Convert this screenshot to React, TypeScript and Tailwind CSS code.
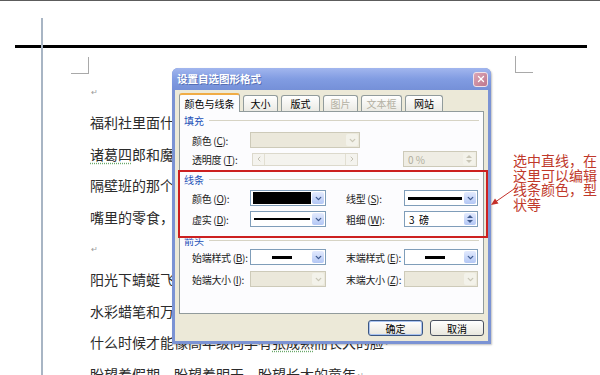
import { ChevronDown, ChevronLeft, ChevronRight, X } from 'lucide-react';
import type { ReactNode } from 'react';

const cjk = "font-['Noto_Sans_CJK_SC','Noto_Sans',sans-serif]";

const Ret = () => <span className="ml-px align-top text-[8px] text-[#9a9a9a]">↵</span>;

const Arrows = () => (
  <>
    <svg width="6" height="3" viewBox="0 0 6 3"><path d="M0 3 L3 0 L6 3Z" fill="currentColor" /></svg>
    <svg width="6" height="3" viewBox="0 0 6 3"><path d="M0 0 L3 3 L6 0Z" fill="currentColor" /></svg>
  </>
);

function Combo({ className, disabled, children }: { className: string; disabled?: boolean; children?: ReactNode }) {
  return (
    <div className={`flex h-[16px] items-stretch border p-px ${disabled ? 'border-[#cdcab9] bg-[#ebe8db]' : 'border-[#7f9db9] bg-white'} ${className}`}>
      <div className="flex flex-1 items-center overflow-hidden">{children}</div>
      <div className={`flex w-[12px] items-center justify-center rounded-[2px] ${disabled ? 'bg-[#f3f2ea] text-[#c9c6b6]' : 'bg-linear-to-b from-[#e3eafd] to-[#b3c7f5] text-[#3f5a8e]'}`}>
        <ChevronDown size={9} strokeWidth={3.5} />
      </div>
    </div>
  );
}

function Spin({ className, disabled, value }: { className: string; disabled?: boolean; value: string }) {
  return (
    <div className={`flex h-[16px] items-stretch border p-px ${disabled ? 'border-[#cdcab9] bg-[#efede4]' : 'border-[#7f9db9] bg-white'} ${className}`}>
      <div className={`flex flex-1 items-center whitespace-pre pl-[3px] text-[10px] ${disabled ? 'text-[#b0ad9e]' : 'text-black'}`}>{value}</div>
      <div className={`flex w-[12px] flex-col items-center justify-center gap-[2px] rounded-[2px] ${disabled ? 'bg-[#f3f2ea] text-[#c9c6b6]' : 'bg-linear-to-b from-[#e3eafd] to-[#b3c7f5] text-[#3f5a8e]'}`}>
        <Arrows />
      </div>
    </div>
  );
}

function Label({ children, className = 'w-[58px]' }: { children: ReactNode; className?: string }) {
  return <span className={`shrink-0 whitespace-nowrap text-[10px] tracking-[-0.3px] text-[#1a1a1a] ${className}`}>{children}</span>;
}

function Group({ label, className }: { label: string; className: string }) {
  return (
    <div className={`flex h-[12px] items-center gap-[5px] pl-[4px] pr-[4px] ${className}`}>
      <span className="text-[10px] text-[#2452b8]">{label}</span>
      <div className="h-px flex-1 bg-[#d6d3c4]" />
    </div>
  );
}

function Btn({ children, primary }: { children: ReactNode; primary?: boolean }) {
  return (
    <div className={`flex h-[16px] items-center justify-center rounded-[3px] border bg-linear-to-b from-white to-[#e9e7de] text-[10px] text-black ${primary ? 'w-[55px] border-[#3b5682] shadow-[inset_0_0_0_1px_#a9c3f0]' : 'w-[54px] border-[#4a5160]'}`}>
      {children}
    </div>
  );
}

const tabs = [
  { label: '颜色与线条', w: 'w-[61px]', active: true },
  { label: '大小', w: 'w-[35px]' },
  { label: '版式', w: 'w-[39px]' },
  { label: '图片', w: 'w-[35px]', disabled: true },
  { label: '文本框', w: 'w-[41px]', disabled: true },
  { label: '网站', w: 'w-[38px]' },
];

function Dialog() {
  return (
    <div className="absolute left-[172px] top-[67px] flex h-[276px] w-[319px] flex-col rounded-t-[6px] bg-[#7b93d4] shadow-[1px_1px_2px_rgba(0,0,0,0.25)]">
      {/* title bar */}
      <div className="flex h-[22px] items-center justify-between rounded-t-[6px] bg-linear-to-b from-[#a2b6ee] via-[#819ce2] to-[#7590d8] pl-[5px] pr-[3px]">
        <span className="text-[10.5px] font-bold text-white [text-shadow:1px_1px_0_rgba(40,60,130,0.45)]">设置自选图形格式</span>
        <div className="flex h-[15px] w-[15px] items-center justify-center rounded-[3px] border border-[#f1e2e8] bg-linear-to-br from-[#dca6b6] to-[#bd768d]">
          <X className="h-[10px] w-[10px] text-white" strokeWidth={3} />
        </div>
      </div>

      <div className="mx-[3px] mb-[3px] flex flex-1 flex-col bg-[#ece9d8] px-[4px] pt-[3px]">
        {/* tabs */}
        <div className="relative z-10 flex h-[18px] items-end gap-[3px]">
          {tabs.map(t =>
            t.active ? (
              <div key={t.label} className={`-mb-px flex h-[19px] items-center justify-center rounded-t-[3px] border border-b-0 border-[#919b9c] border-t-2 border-t-[#f0ac45] bg-[#fcfcfe] text-[10px] text-black ${t.w}`}>
                {t.label}
              </div>
            ) : (
              <div key={t.label} className={`flex h-[16px] items-center justify-center rounded-t-[3px] border border-b-0 border-[#919b9c] bg-linear-to-b from-white to-[#ebeae4] text-[10px] ${t.w} ${t.disabled ? 'text-[#b3b0a2]' : 'text-black'}`}>
                {t.label}
              </div>
            )
          )}
        </div>

        {/* panel */}
        <div className="flex h-[203px] flex-col border border-[#919b9c] bg-[#fcfcfe]">
          <Group label="填充" className="mt-[2px]" />
          <div className="mt-[6px] flex h-[16px] items-center pl-[12px]">
            <Label>颜色 (<u>C</u>):</Label>
            <Combo className="w-[110px]" disabled />
          </div>
          <div className="mt-[4px] flex h-[14px] items-center pl-[12px]">
            <Label className="w-[60px]">透明度 (<u>T</u>):</Label>
            <div className="flex h-[13px] w-[106px] items-stretch border border-[#dcd9cc] bg-[#f4f3ee]">
              <div className="flex w-[12px] items-center justify-center border-r border-[#e2dfd2] text-[#c4c1b3]">
                <ChevronLeft size={8} strokeWidth={3} />
              </div>
              <div className="flex-1" />
              <div className="flex w-[12px] items-center justify-center border-l border-[#e2dfd2] text-[#c4c1b3]">
                <ChevronRight size={8} strokeWidth={3} />
              </div>
            </div>
            <Spin className="ml-[45px] w-[74px]" disabled value="0 %" />
          </div>

          <Group label="线条" className="mt-[7px]" />
          <div className="mt-[5px] flex h-[16px] items-center pl-[12px]">
            <Label>颜色 (<u>O</u>):</Label>
            <Combo className="w-[76px]">
              <div className="mx-px h-[12px] flex-1 bg-black" />
            </Combo>
            <Label className="ml-[20px] w-[58px]">线型 (<u>S</u>):</Label>
            <Combo className="w-[74px]">
              <div className="mx-[2px] h-[3px] flex-1 bg-black" />
            </Combo>
          </div>
          <div className="mt-[5px] flex h-[16px] items-center pl-[12px]">
            <Label>虚实 (<u>D</u>):</Label>
            <Combo className="w-[76px]">
              <div className="mx-[2px] h-[2px] flex-1 bg-black" />
            </Combo>
            <Label className="ml-[20px] w-[58px]">粗细 (<u>W</u>):</Label>
            <Spin className="w-[74px]" value="3  磅" />
          </div>

          <Group label="箭头" className="mt-[7px]" />
          <div className="mt-[3px] flex h-[16px] items-center pl-[12px]">
            <Label>始端样式 (<u>B</u>):</Label>
            <Combo className="w-[76px]">
              <div className="mx-auto h-[3px] w-[20px] bg-black" />
            </Combo>
            <Label className="ml-[20px] w-[58px]">末端样式 (<u>E</u>):</Label>
            <Combo className="w-[74px]">
              <div className="mx-auto h-[3px] w-[20px] bg-black" />
            </Combo>
          </div>
          <div className="mt-[6px] flex h-[16px] items-center pl-[12px]">
            <Label>始端大小 (<u>I</u>):</Label>
            <Combo className="w-[76px]" disabled />
            <Label className="ml-[20px] w-[58px]">末端大小 (<u>Z</u>):</Label>
            <Combo className="w-[74px]" disabled />
          </div>
        </div>

        {/* buttons */}
        <div className="mt-[6px] flex justify-end gap-[7px]">
          <Btn primary>确定</Btn>
          <Btn>取消</Btn>
        </div>
      </div>
    </div>
  );
}

export default function App() {
  return (
    <div className={`relative h-[375px] w-[600px] overflow-hidden border-t border-[#5c5c5c] bg-white ${cjk}`}>
      <div className="ml-[15px] mt-[44px] h-[3px] w-[572px] bg-black" />
      <div className="mt-[9px] flex justify-between pl-[71px] pr-[67px]">
        <div className="h-[17px] w-[18px] border-b border-r border-[#a9a9a9]" />
        <div className="-mt-px h-[17px] w-[18px] border-b border-l border-[#a9a9a9]" />
      </div>

      <div className="mt-[2px] whitespace-nowrap pl-[90px] text-[14px] leading-[31.4px] text-[#2b2b2b]">
        <p><Ret /></p>
        <p>福利社里面什么都有，就是口袋里没有半毛钱<Ret /></p>
        <p>
          <span className="underline decoration-[#6aa86a] decoration-dotted underline-offset-[3px]">诸葛四</span>郎和魔鬼党，到底谁抢到那支宝剑<Ret />
        </p>
        <p>隔壁班的那个女孩，怎么还没经过我的窗前<Ret /></p>
        <p>嘴里的零食，手里的漫画，心里初恋的童年<Ret /></p>
        <p><Ret /></p>
        <p>阳光下蜻蜓飞过来，一片片绿油油的稻田<Ret /></p>
        <p>水彩蜡笔和万花筒，画不出天边那一条彩虹<Ret /></p>
        <p>
          什么时候才能像高年级同学有<span className="underline decoration-[#6aa86a] decoration-dotted underline-offset-[3px]">张成熟</span>而长大的脸<Ret />
        </p>
        <p>盼望着假期，盼望着明天，盼望长大的童年<Ret /></p>
      </div>

      {/* margin guide */}
      <div className="absolute bottom-0 left-[41px] top-[17px] w-[2px] bg-[#a8b5c4]" />

      <Dialog />

      {/* red highlight around line settings */}
      <div className="absolute left-[178px] top-[169px] h-[68px] w-[310px] border-2 border-[#cc2020]" />

      {/* annotation */}
      <svg className="absolute left-[486px] top-[184px]" width="32" height="24" viewBox="0 0 32 24">
        <line x1="28" y1="4" x2="10" y2="16.5" stroke="#c4302a" strokeWidth="1" />
        <polygon points="5,20 12.5,18.5 9,13.5" fill="#c4302a" />
      </svg>
      <div className="absolute left-[513px] top-[152px] whitespace-nowrap text-[14px] leading-[14.7px] text-[#c0392b]">
        <p>选中直线，在</p>
        <p>这里可以编辑</p>
        <p>线条颜色，型</p>
        <p>状等</p>
      </div>
    </div>
  );
}
